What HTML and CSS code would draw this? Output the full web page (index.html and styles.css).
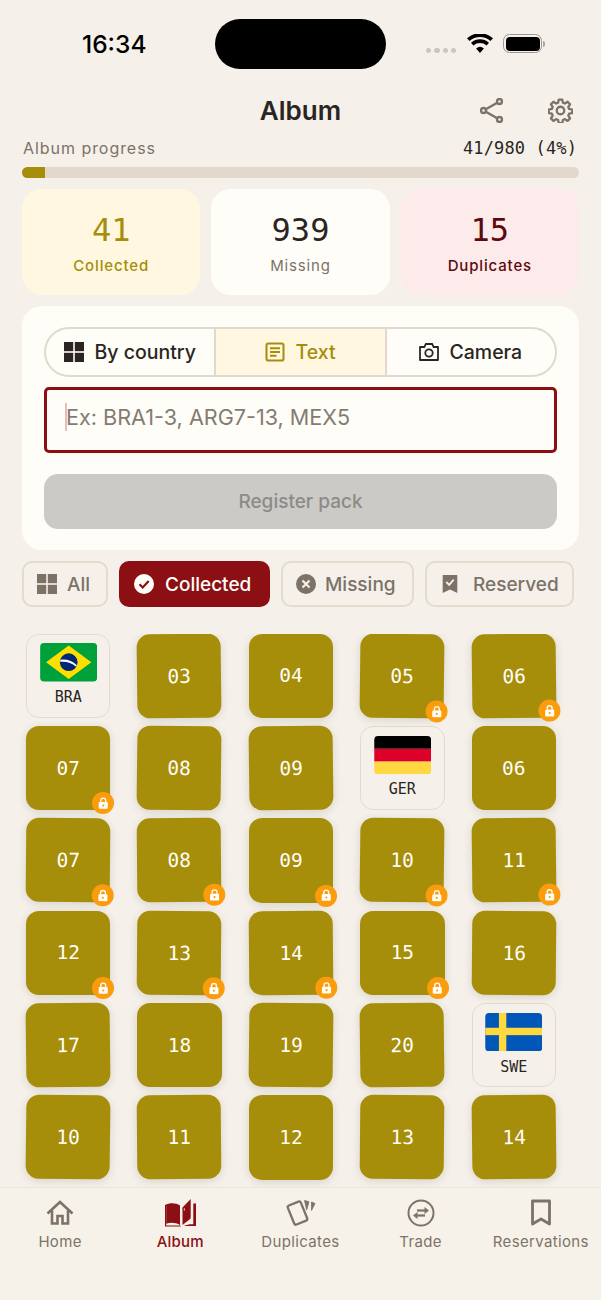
FILE: index.html
```html
<!DOCTYPE html>
<html lang="en">
<head>
<meta charset="utf-8">
<title>Album</title>
<link rel="stylesheet" href="styles.css">
</head>
<body>
<svg class="defs" width="0" height="0" aria-hidden="true">
  <defs>
    <symbol id="lock" viewBox="0 0 12 14">
      <path d="M3.200 6.500V4a2.800 2.800 0 0 1 5.600 0v2.500" fill="none" stroke="currentColor" stroke-width="1.500"/>
      <path fill-rule="evenodd" d="M2 5.600h8a1.200 1.200 0 0 1 1.200 1.200v5.400a1.200 1.200 0 0 1-1.200 1.200H2a1.200 1.200 0 0 1-1.200-1.200V6.800A1.200 1.200 0 0 1 2 5.600zM6 8.300a1.200 1.200 0 1 0 0 2.400 1.200 1.200 0 0 0 0-2.400z" fill="currentColor"/>
    </symbol>
  </defs>
</svg>
<div class="app">
  <div class="status">
    <span class="time">16:34</span>
    <span class="island"></span>
    <span class="status-right">
      <span class="signal"><i></i><i></i><i></i><i></i></span>
      <svg class="wifi" viewBox="0 0 26 19"><path d="M13 19l-3.900-4.500a6 6 0 0 1 7.800 0zM6.400 11.400L4 8.700a13.600 13.600 0 0 1 18 0l-2.400 2.700a10 10 0 0 0-13.200 0zM2.500 7L0 4.200a19.600 19.600 0 0 1 26 0L23.500 7a16 16 0 0 0-21 0z"/></svg>
      <span class="battery"><span class="battery-fill"></span></span><span class="battery-cap"></span>
    </span>
  </div>

  <header class="top">
    <h1>Album</h1>
    <div class="top-actions">
      <svg class="share-icon" viewBox="0 0 23 25" fill="none" stroke="currentColor" stroke-width="2.400"><circle cx="19.500" cy="3.500" r="2.500"/><circle cx="19.500" cy="21.500" r="2.500"/><circle cx="3.500" cy="12.500" r="2.500"/><path d="M5.800 11.200L17.200 4.800M5.800 13.800l11.400 6.400"/></svg>
      <svg class="gear-icon" viewBox="0 0 24 24" fill="none" stroke="currentColor" stroke-width="2.200" stroke-linejoin="round"><circle cx="12" cy="12" r="3.600"/><path d="M10.300 1.500h3.400l.6 3 1.900.8 2.600-1.700 2.400 2.400-1.700 2.600.8 1.900 3 .6v3.400l-3 .6-.8 1.900 1.700 2.600-2.400 2.400-2.600-1.700-1.900.8-.6 3h-3.400l-.6-3-1.900-.8-2.600 1.700-2.400-2.400 1.700-2.600-.8-1.900-3-.6v-3.400l3-.6.8-1.900-1.700-2.600 2.400-2.400 2.600 1.700 1.900-.8z"/></svg>
    </div>
  </header>

  <section class="progress">
    <div class="progress-row"><span class="progress-label">Album progress</span><span class="progress-count">41/980 (4%)</span></div>
    <div class="bar"><div class="bar-fill"></div></div>
  </section>

  <section class="stats">
    <div class="stat stat-collected"><b>41</b><span>Collected</span></div>
    <div class="stat stat-missing"><b>939</b><span>Missing</span></div>
    <div class="stat stat-dupes"><b>15</b><span>Duplicates</span></div>
  </section>

  <section class="panel">
    <div class="segments">
      <div class="segment">
        <svg class="seg-icon" viewBox="0 0 20 20" fill="currentColor"><rect width="9.200" height="9.200"/><rect x="10.800" width="9.200" height="9.200"/><rect y="10.800" width="9.200" height="9.200"/><rect x="10.800" y="10.800" width="9.200" height="9.200"/></svg>
        By country
      </div>
      <div class="segment segment-on">
        <svg class="seg-icon" viewBox="0 0 20 20" fill="none" stroke="currentColor" stroke-width="2"><rect x="1.500" y="1.500" width="17" height="17" rx="1.800"/><path d="M5 6.300h10M5 10h10M5 13.700h6.500"/></svg>
        Text
      </div>
      <div class="segment">
        <svg class="seg-icon" viewBox="0 0 20 20" fill="none" stroke="currentColor" stroke-width="1.800" stroke-linejoin="round"><path d="M1 5h4.500l1.200-3h6.600l1.200 3H19v13H1z"/><circle cx="10" cy="11" r="3.700"/></svg>
        Camera
      </div>
    </div>
    <div class="field"><span class="caret"></span><span class="placeholder">Ex: BRA1-3, ARG7-13, MEX5</span></div>
    <div class="submit">Register pack</div>
  </section>

  <nav class="filters">
    <div class="chip chip-all">
      <svg class="chip-icon" viewBox="0 0 20 20" fill="currentColor"><rect width="9.200" height="9.200"/><rect x="10.800" width="9.200" height="9.200"/><rect y="10.800" width="9.200" height="9.200"/><rect x="10.800" y="10.800" width="9.200" height="9.200"/></svg>
      All
    </div>
    <div class="chip chip-on">
      <svg class="chip-icon" viewBox="0 0 20 20"><circle cx="10" cy="10" r="10" fill="currentColor"/><path d="M5.500 10.300l3.200 3.200 6-6.500" fill="none" stroke="#8c0f14" stroke-width="2.200"/></svg>
      Collected
    </div>
    <div class="chip chip-missing">
      <svg class="chip-icon" viewBox="0 0 20 20"><circle cx="10" cy="10" r="10" fill="currentColor"/><path d="M6.500 6.500l7 7M13.500 6.500l-7 7" fill="none" stroke="#f5f1ea" stroke-width="2.200"/></svg>
      Missing
    </div>
    <div class="chip chip-reserved">
      <svg class="chip-icon" viewBox="0 0 20 20"><path d="M2.700 1h14.600v18L10 15.500 2.700 19z" fill="currentColor"/><path d="M6.300 8l2.900 2.900 4.500-5.200" fill="none" stroke="#f5f1ea" stroke-width="1.800"/></svg>
      Reserved
    </div>
  </nav>

  <main class="grid-wrap">
    <div class="grid">
      <div class="flag-card">
        <svg class="flag" viewBox="0 0 58 39"><rect width="58" height="39" rx="4" fill="#00a03a"/><path d="M29 2.500L52 19.500 29 36.500 6 19.500z" fill="#ffdf00"/><circle cx="29" cy="19.500" r="9" fill="#002776"/><path d="M20.500 17c6-1 12.500 1 16.800 5.500l-.7 1.600C32 19.800 26 18.400 20.300 19.100z" fill="#fff"/></svg>
        <span>BRA</span></div>
      <div class="sticker t-n7">03</div>
      <div class="sticker">04</div>
      <div class="sticker t-p7">05<span class="lock"><svg><use href="#lock"/></svg></span></div>
      <div class="sticker t-n7">06<span class="lock"><svg><use href="#lock"/></svg></span></div>

      <div class="sticker">07<span class="lock"><svg><use href="#lock"/></svg></span></div>
      <div class="sticker t-p7">08</div>
      <div class="sticker t-n7">09</div>
      <div class="flag-card">
        <svg class="flag" viewBox="0 0 58 39"><defs><clipPath id="ger"><rect width="58" height="39" rx="4"/></clipPath></defs><g clip-path="url(#ger)"><rect width="58" height="13" fill="#000"/><rect y="13" width="58" height="13" fill="#dd0029"/><rect y="26" width="58" height="13" fill="#ffd740"/></g></svg>
        <span>GER</span></div>
      <div class="sticker">06</div>

      <div class="sticker t-p5">07<span class="lock"><svg><use href="#lock"/></svg></span></div>
      <div class="sticker t-n5">08<span class="lock"><svg><use href="#lock"/></svg></span></div>
      <div class="sticker">09<span class="lock"><svg><use href="#lock"/></svg></span></div>
      <div class="sticker t-p7">10<span class="lock"><svg><use href="#lock"/></svg></span></div>
      <div class="sticker t-n7">11<span class="lock"><svg><use href="#lock"/></svg></span></div>

      <div class="sticker">12<span class="lock"><svg><use href="#lock"/></svg></span></div>
      <div class="sticker t-p5">13<span class="lock"><svg><use href="#lock"/></svg></span></div>
      <div class="sticker t-n5">14<span class="lock"><svg><use href="#lock"/></svg></span></div>
      <div class="sticker">15<span class="lock"><svg><use href="#lock"/></svg></span></div>
      <div class="sticker t-p5">16</div>

      <div class="sticker t-n7">17</div>
      <div class="sticker">18</div>
      <div class="sticker t-p7">19</div>
      <div class="sticker t-n7">20</div>
      <div class="flag-card">
        <svg class="flag" viewBox="0 0 58 39"><defs><clipPath id="swe"><rect width="58" height="39" rx="4"/></clipPath></defs><g clip-path="url(#swe)"><rect width="58" height="39" fill="#0057b7"/><rect x="14" width="7.500" height="39" fill="#ffd83d"/><rect y="15" width="58" height="7.500" fill="#ffd83d"/></g></svg>
        <span>SWE</span></div>

      <div class="sticker t-p7">10</div>
      <div class="sticker t-n5">11</div>
      <div class="sticker">12</div>
      <div class="sticker t-p5">13</div>
      <div class="sticker t-n7">14</div>
    </div>
  </main>

  <footer class="tabs">
    <div class="tab">
      <svg class="tab-icon" viewBox="0 0 28 28" fill="none" stroke="currentColor" stroke-width="2.600"><path d="M1.500 14.500L14 3l12.500 11.500M6 11.500V24.500h5.500v-7.500h5v7.500H22V11.500"/></svg>
      <span>Home</span>
    </div>
    <div class="tab tab-on">
      <svg class="tab-icon tab-album" viewBox="0 0 31 28"><path d="M0 6C5 3.500 11 3.800 15 6.500V26C11 23.500 5 23.300 1.200 24.800V6.800H0z" fill="currentColor"/><path d="M17.500 8.500L25.700 0v18.500l-6 4.800V9l-2.200 2z" fill="currentColor"/><path d="M17.500 9v17l8.200-6.500" fill="currentColor"/><path d="M28.300 4.500H31V27H19c3-1.500 6-2.100 9.300-1.800z" fill="currentColor"/><path d="M.6 6v21h15" fill="none" stroke="currentColor" stroke-width="1.200"/></svg>
      <span>Album</span>
    </div>
    <div class="tab">
      <svg class="tab-icon tab-dupes" viewBox="0 0 32 28" fill="none" stroke="currentColor" stroke-width="2.300" stroke-linejoin="round"><rect x="6.500" y="3.800" width="14" height="20.500" rx="1.800" transform="rotate(-22 13.500 14)"/><path d="M20.500 1.500l4.500 1.200-2.300 8.300z" fill="currentColor" stroke-width=".8"/><path d="M27.500 3l3.500 1.500-3.500 7z" fill="currentColor" stroke-width=".8"/></svg>
      <span>Duplicates</span>
    </div>
    <div class="tab">
      <svg class="tab-icon" viewBox="0 0 28 28" fill="none" stroke="currentColor" stroke-width="2"><circle cx="14" cy="14" r="12.500"/><path d="M10 11.500h9" stroke-width="2.200"/><path d="M17.500 8l4.500 3.500-4.500 3.500z" fill="currentColor" stroke="none"/><path d="M18 16.500H9" stroke-width="2.200"/><path d="M10.500 13l-4.500 3.500 4.500 3.500z" fill="currentColor" stroke="none"/></svg>
      <span>Trade</span>
    </div>
    <div class="tab">
      <svg class="tab-icon" viewBox="0 0 28 28" fill="none" stroke="currentColor" stroke-width="2.800"><path d="M5.500 2h17v23L14 20 5.500 25z" stroke-linejoin="round"/></svg>
      <span>Reservations</span>
    </div>
  </footer>
</div>
</body>
</html>
```
FILE: styles.css
```css
* { box-sizing: border-box; }
html, body { margin: 0; padding: 0; }
body { background: #f5f1ea; color: #2a2522; font-family: Inter, "Liberation Sans", sans-serif; }
.defs { position: absolute; }
.app { width: 601px; height: 1300px; display: flex; flex-direction: column; overflow: hidden; }

/* status bar */
.status { height: 88px; display: flex; align-items: flex-start; padding-top: 19px; padding-left: 82px; }
.time { width: 133px; padding-top: 10px; font-size: 24.500px; line-height: 30px; font-weight: 500; color: #000; }
.island { width: 171px; height: 50px; border-radius: 25px; background: #000; }
.status-right { margin-left: 40px; height: 50px; display: flex; align-items: center; }
.signal { display: flex; gap: 3px; margin-top: 13px; margin-right: 11px; }
.signal i { width: 5.250px; height: 5.250px; border-radius: 50%; background: #c8c6c2; }
.wifi { width: 26px; height: 19px; fill: #000; margin-right: 10px; margin-top: -1px; }
.battery { width: 39px; height: 19px; border: 1.500px solid #9c978f; border-radius: 6.500px; padding: 1.500px; display: flex; margin-top: -1px; }
.battery-fill { flex: 1; background: #000; border-radius: 4px; }
.battery-cap { width: 2px; height: 6px; background: #a9a5a0; border-radius: 0 2px 2px 0; margin-left: 1px; margin-top: -1px; }

/* header */
.top { height: 46px; position: relative; display: flex; align-items: center; justify-content: center; }
.top h1 { margin: 0; font-size: 26px; line-height: 46px; font-weight: 600; color: #2a2522; }
.top-actions { position: absolute; right: 28.500px; top: 10px; display: flex; gap: 44.500px; align-items: center; color: #7d7268; }
.share-icon { width: 23px; height: 25px; display: block; }
.gear-icon { width: 25px; height: 25px; display: block; }

/* progress */
.progress { padding: 0 22px; margin-top: 1px; }
.progress-row { height: 26px; display: flex; justify-content: space-between; align-items: center; padding-left: 1px; padding-right: 2px; }
.progress-label { font-size: 16px; letter-spacing: .95px; color: #7d7268; }
.progress-count { font-family: "DejaVu Sans Mono", "Liberation Mono", monospace; font-size: 17px; letter-spacing: .13px; color: #2a2522; }
.bar { height: 11px; margin-top: 6px; border-radius: 6px; background: #e2d9cc; overflow: hidden; }
.bar-fill { width: 23px; height: 100%; background: #a68d0a; }

/* stats */
.stats { display: flex; gap: 11px; padding: 0 22px; margin-top: 11px; }
.stat { flex: 1; height: 106px; border-radius: 20px; display: flex; flex-direction: column; align-items: center; padding-top: 20px; }
.stat b { font-family: "DejaVu Sans Mono", "Liberation Mono", monospace; font-size: 32px; line-height: 42px; font-weight: 400; }
.stat span { margin-top: 5px; font-size: 15px; line-height: 20px; letter-spacing: .85px; font-weight: 500; }
.stat-collected { background: #fff7df; color: #a68d0a; }
.stat-missing { background: #fffdf8; }
.stat-missing span { color: #7d7268; font-weight: 400; }
.stat-dupes { background: #fdeaea; color: #5c0a0e; }

/* entry panel */
.panel { margin: 11px 22px 0; height: 244px; padding: 21px 22px 0; border-radius: 20px; background: #fffdf8; }
.segments { height: 50px; display: flex; border: 2px solid #e2d9cc; border-radius: 25px; overflow: hidden; }
.segment { flex: 1; display: flex; align-items: center; justify-content: center; gap: 10px; font-size: 19.500px; font-weight: 500; color: #2a2522; }
.segment + .segment { border-left: 2px solid #e2d9cc; }
.segment-on { background: #fff7df; color: #a68d0a; }
.seg-icon { width: 20px; height: 20px; }
.field { margin-top: 10px; height: 66px; border: 3px solid #8c0f14; border-radius: 5px; display: flex; align-items: center; padding-left: 18px; padding-bottom: 6px; }
.caret { width: 2px; height: 28px; background: #e9bcbc; margin-right: -1px; }
.placeholder { font-size: 21.600px; color: #857b72; }
.submit { margin-top: 21px; height: 55px; border-radius: 14px; background: #cbcac6; color: #8d8b87; font-size: 19px; font-weight: 500; display: flex; align-items: center; justify-content: center; }

/* filters */
.filters { display: flex; gap: 11px; padding: 0 22px; margin-top: 11px; height: 46px; }
.chip { height: 46px; border: 2px solid #e2dccf; border-radius: 10px; display: flex; align-items: center; padding-left: 13px; gap: 10px; font-size: 19px; font-weight: 500; color: #7d7268; }
.chip-icon { width: 20px; height: 20px; flex: none; }
.chip-all { width: 86px; }
.chip-on { width: 151px; background: #8c0f14; border-color: #8c0f14; color: #fffdf8; gap: 11px; }
.chip-missing { width: 133px; gap: 9px; }
.chip-reserved { width: 149px; gap: 13px; }

/* grid */
.grid-wrap { flex: 1; min-height: 0; margin-top: 26.500px; overflow: hidden; }
.grid { display: grid; grid-template-columns: repeat(5, 84.400px); grid-auto-rows: 84.400px; column-gap: 27px; row-gap: 8px; padding-left: 26px; padding-right: 20px; }
.sticker { position: relative; border-radius: 13px; background: #a68d0a; box-shadow: 0 2px 8px rgba(60, 50, 30, .16); color: #fffdf8; font-family: "DejaVu Sans Mono", "Liberation Mono", monospace; font-size: 19.500px; display: flex; align-items: center; justify-content: center; }
.t-n7 { transform: rotate(-.7deg); }
.t-n5 { transform: rotate(-.5deg); }
.t-p5 { transform: rotate(.5deg); }
.t-p7 { transform: rotate(.7deg); }
.flag-card { border: 1.500px solid #e2dccf; border-radius: 13px; background: #f5f1ea; display: flex; flex-direction: column; align-items: center; padding-top: 8.700px; }
.flag { width: 57.400px; height: 38.400px; display: block; flex: none; }
.flag-card span { margin-top: 5.500px; font-family: "DejaVu Sans Mono", "Liberation Mono", monospace; font-size: 15px; line-height: 20px; color: #2a2522; }
.lock { position: absolute; right: -4px; bottom: -4px; width: 22px; height: 22px; border-radius: 50%; background: #fb9c0c; color: #fffdf8; display: flex; align-items: center; justify-content: center; }
.lock svg { width: 10.500px; height: 12.500px; }

/* tabs */
.tabs { height: 113px; flex: none; display: flex; border-top: 1px solid #ebe6da; background: #f6f2e9; }
.tab { width: 120.200px; display: flex; flex-direction: column; align-items: center; padding-top: 11px; color: #7d7268; }
.tab span { margin-top: 5px; font-size: 15px; line-height: 20px; font-weight: 400; letter-spacing: .35px; }
.tab-on span { font-weight: 500; letter-spacing: .2px; }
.tab-on { color: #8c0f14; }
.tab-icon { width: 28px; height: 28px; display: block; }
.tab-album { width: 31px; }
.tab-dupes { width: 32px; }
```
